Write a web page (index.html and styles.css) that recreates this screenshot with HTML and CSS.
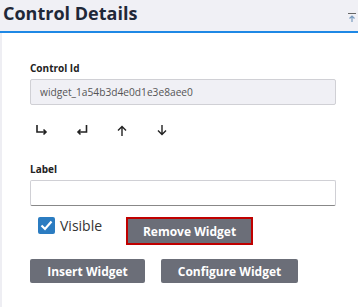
FILE: index.html
```html
<!DOCTYPE html>
<html lang="en">
<head>
  <meta charset="UTF-8">
  <title>Control Details</title>
  <link rel="stylesheet" href="styles.css">
</head>
<body>
  <div class="panel">
    <div class="head">
      <span class="title">Control Details</span>
      <svg class="pin" width="10" height="10" viewBox="0 0 10 10">
        <line x1="1" y1="0.5" x2="9" y2="0.5" stroke="#666" stroke-width="1"/>
        <path d="M5 9V3M2.5 5.5L5 3L7.5 5.5" fill="none" stroke="#7a9cc0" stroke-width="1.2"/>
      </svg>
    </div>
    <div class="body">
      <div class="field">
        <label class="lbl">Control Id</label>
        <div class="input readonly">widget_1a54b3d4e0d1e3e8aee0</div>
      </div>
      <div class="moves">
        <svg width="12" height="11" viewBox="0 0 12 11">
          <path d="M1 0V7H10M7.5 4.5L10 7L7.5 9.5" fill="none" stroke="#222" stroke-width="1.6"/>
        </svg>
        <svg width="12" height="11" viewBox="0 0 12 11">
          <path d="M10.5 0V7H2M4.5 4.5L2 7L4.5 9.5" fill="none" stroke="#222" stroke-width="1.6"/>
        </svg>
        <svg width="12" height="11" viewBox="0 0 12 11">
          <path d="M6 11V1.5M2 5.5L6 1.5L10 5.5" fill="none" stroke="#222" stroke-width="1.4"/>
        </svg>
        <svg width="12" height="11" viewBox="0 0 12 11">
          <path d="M6 0V9.5M2 5.5L6 9.5L10 5.5" fill="none" stroke="#222" stroke-width="1.4"/>
        </svg>
      </div>
      <div class="field">
        <label class="lbl">Label</label>
        <div class="input text"></div>
      </div>
      <div class="row1">
        <div class="check">
          <span class="box">
            <svg width="13" height="11" viewBox="0 0 13 11">
              <path d="M1.5 5.5L5 9L11.5 1.5" fill="none" stroke="#fff" stroke-width="2.2"/>
            </svg>
          </span>
          <span class="ctext">Visible</span>
        </div>
        <button class="btn danger">Remove Widget</button>
      </div>
      <div class="row2">
        <button class="btn insert">Insert Widget</button>
        <button class="btn configure">Configure Widget</button>
      </div>
    </div>
  </div>
</body>
</html>
```

FILE: styles.css
```css
body{
  margin: 0;
  background: #eeeef3;
  font-family: "Open Sans", "Liberation Sans", sans-serif;
  color: #222;
}
.panel{
  margin-left: 2px;
  height: 307px;
  background: #fff;
}
.head{
  height: 31px;
  background: #f0f0f5;
  border-bottom: 2px solid #1e88e5;
  display: flex;
  justify-content: space-between;
  align-items: flex-start;
  margin-left: -2px;
  padding-left: 3px;
}
.title{
  font-size: 18px;
  font-weight: 700;
  line-height: 26px;
  color: #1f2838;
}
.pin{
  margin-top: 13px;
  margin-right: 1px;
}
.body{
  padding: 28px 22px 0 28px;
}
.lbl{
  display: block;
  font-size: 10px;
  font-weight: 700;
  line-height: 14px;
  margin-bottom: 4px;
}
.input{
  box-sizing: border-box;
  height: 26px;
  border: 1px solid #d0d0d5;
  border-radius: 2px;
}
.readonly{
  background: #f0f0f5;
  color: #555;
  font-size: 10.2px;
  line-height: 24px;
  padding-left: 9px;
}
.text{
  background: #fff;
  border-bottom-color: #888;
}
.moves{
  display: flex;
  gap: 28px;
  padding: 20px 0 0 6px;
  height: 37px;
}
.row1{
  display: flex;
  align-items: flex-start;
  margin-top: 11px;
  padding-left: 8px;
}
.check{
  display: flex;
  align-items: center;
  gap: 5px;
  width: 88px;
}
.box{
  width: 17px;
  height: 17px;
  border-radius: 2px;
  background: #2b7cc1;
  display: flex;
  align-items: center;
  justify-content: center;
}
.ctext{
  font-size: 14px;
  line-height: 17px;
  color: #333;
}
.btn{
  background: #6b6e78;
  color: #fff;
  border: 0;
  border-radius: 2px;
  font-family: inherit;
  font-weight: 700;
  font-size: 12px;
  height: 24px;
  padding: 0;
}
.danger{
  border: 2px solid #c00000;
  border-radius: 0;
  height: 28px;
  width: 127px;
}
.row2{
  display: flex;
  gap: 16px;
  margin-top: 14px;
}
.insert{
  width: 115px;
}
.configure{
  width: 137px;
}
```
